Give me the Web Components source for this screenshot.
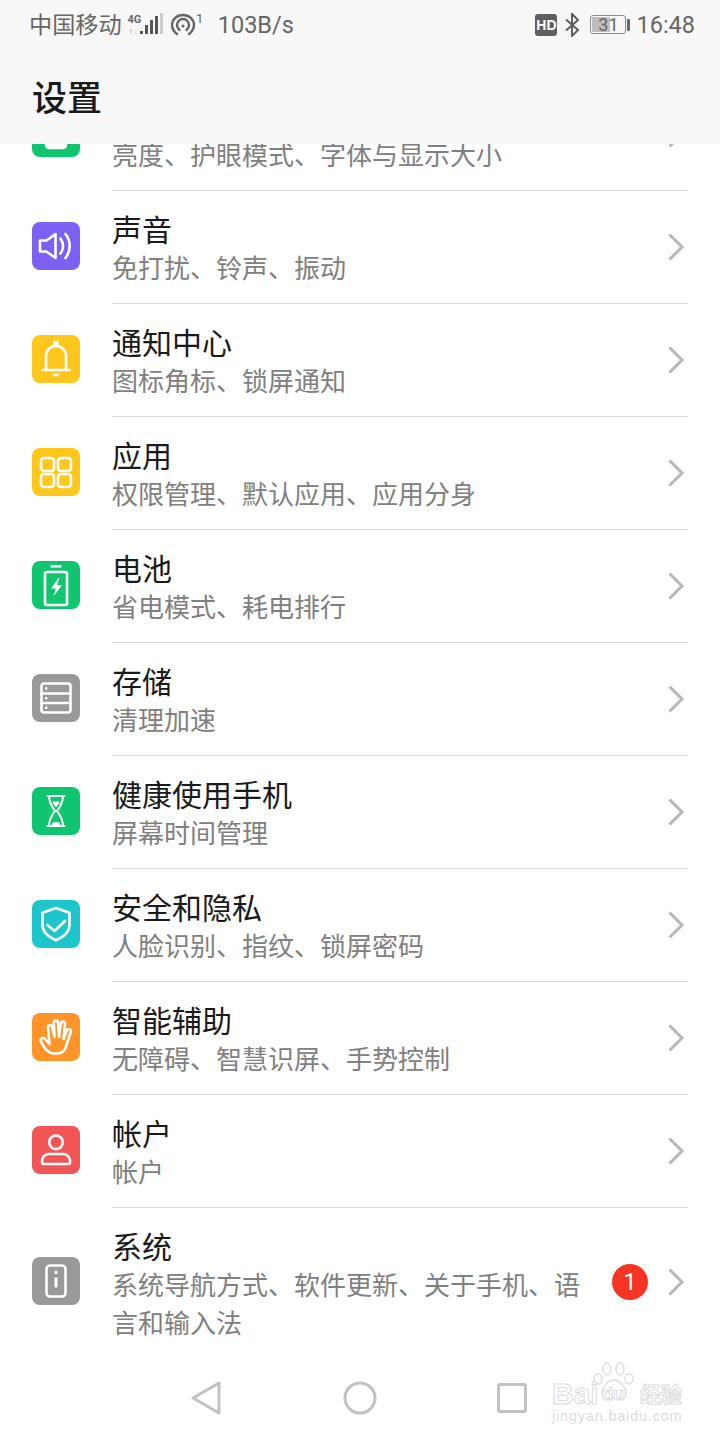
<!DOCTYPE html>
<html lang="zh">
<head>
<meta charset="utf-8">
<title>设置</title>
<style>
  html, body { margin: 0; padding: 0; background: #fff; }
  body {
    width: 720px; height: 1440px; overflow: hidden;
    display: flex; flex-direction: column; position: relative;
    font-family: Roboto, "Noto Sans CJK SC", sans-serif;
  }
  main { flex: 1; min-height: 0; overflow: hidden; }
  .list { margin-top: -66px; }
</style>
</head>
<body>
<app-header title="设置"></app-header>
<main>
  <div class="list">
    <setting-row heading="" sub="亮度、护眼模式、字体与显示大小" icon="display" color="#0fc66f"></setting-row>
    <setting-row heading="声音" sub="免打扰、铃声、振动" icon="sound" color="#7d60f2"></setting-row>
    <setting-row heading="通知中心" sub="图标角标、锁屏通知" icon="bell" color="#ffc71c"></setting-row>
    <setting-row heading="应用" sub="权限管理、默认应用、应用分身" icon="apps" color="#ffc71c"></setting-row>
    <setting-row heading="电池" sub="省电模式、耗电排行" icon="battery" color="#0fc66f"></setting-row>
    <setting-row heading="存储" sub="清理加速" icon="storage" color="#999999"></setting-row>
    <setting-row heading="健康使用手机" sub="屏幕时间管理" icon="hourglass" color="#0fc66f"></setting-row>
    <setting-row heading="安全和隐私" sub="人脸识别、指纹、锁屏密码" icon="shield" color="#1cc6cc"></setting-row>
    <setting-row heading="智能辅助" sub="无障碍、智慧识屏、手势控制" icon="hand" color="#ff9428"></setting-row>
    <setting-row heading="帐户" sub="帐户" icon="user" color="#f25555"></setting-row>
    <setting-row heading="系统" sub="系统导航方式、软件更新、关于手机、语言和输入法" icon="info" color="#999999" badge="1" last></setting-row>
  </div>
</main>
<nav-bar></nav-bar>
<baidu-mark></baidu-mark>

<script>
const ICONS = {
  display: `<rect x="14" y="12" width="20" height="27" rx="3" fill="#fff"/>`,
  sound: `<path d="M8 18.500h6.500L23.500 12v24l-9-6.500H8z"/><path d="M28.500 16.500c3.400 4.500 3.400 10.500 0 15"/><path d="M33.500 12c5.600 7 5.600 17 0 24"/>`,
  bell: `<path d="M10.500 35h27"/><path d="M14 35V21a10 10 0 0 1 20 0v14"/><circle cx="24" cy="8.500" r="1.600" fill="#fff"/><path d="M20.500 38.700h7c-.8 2-2 2.800-3.500 2.800s-2.700-.8-3.500-2.800z" fill="#fff" stroke="none"/>`,
  apps: `<rect x="9" y="10" width="13" height="13" rx="3"/><rect x="26" y="10" width="13" height="13" rx="3"/><rect x="9" y="26" width="13" height="13" rx="3"/><rect x="26" y="26" width="13" height="13" rx="3"/>`,
  battery: `<rect x="13" y="11" width="22" height="33" rx="2"/><path d="M18.500 5.300h11" stroke-linecap="butt"/><path d="M26.500 17L19 27.500h4.800l-2.300 8L30 24h-5l2.500-7z" fill="#fff" stroke="none"/>`,
  storage: `<rect x="9.500" y="9.500" width="29" height="29" rx="2.500"/><path d="M9.500 19.500h29M9.500 29h29"/><g fill="#fff" stroke="none"><rect x="13" y="13.200" width="2.400" height="2.400"/><rect x="13" y="23" width="2.400" height="2.400"/><rect x="13" y="32.600" width="2.400" height="2.400"/></g>`,
  hourglass: `<g stroke-width="2"><path d="M15.500 9h17M15.500 39h17"/><path d="M17 9c0 7 3 11 6 15-3 4-6 8-6 15M31 9c0 7-3 11-6 15 3 4 6 8 6 15"/></g><path d="M20.500 15c1.200-1 2.300-.7 3.500 0 1.200-.7 2.300-1 3.500 0 0 1.800-1.800 3.500-3.500 5-1.700-1.500-3.500-3.200-3.500-5zM19.500 38c.8-2 2.500-3.200 4.500-3.200s3.700 1.200 4.500 3.200z" fill="#fff" stroke="none"/>`,
  shield: `<path d="M24 8l13.500 4.800v12c0 7.400-6.500 12.500-13.500 15.500-7-3-13.500-8.100-13.500-15.500v-12z"/><path d="M15.500 25l7 6 10.500-10"/>`,
  hand: `<path d="M17.500 31L13 26C11 24 7.500 25.500 9 28.500 10.500 32 13.500 36.500 17 39 19 40.500 21 40.500 24 40.500 29 40.500 32 39 33.500 35L38.700 19A2.100 2.100 0 0 0 34.600 17.700L31.500 26 33 11A2.100 2.100 0 0 0 28.800 10.500L27 24 26 9.500A2.100 2.100 0 0 0 21.800 9.800L22.500 24 20 13.500A2.100 2.100 0 0 0 16 14.500z"/>`,
  user: `<circle cx="24" cy="16.300" r="6.800"/><path d="M17 28h14a7 7 0 0 1 7 7v1.500a1.500 1.500 0 0 1-1.500 1.500h-25a1.500 1.500 0 0 1-1.500-1.500V35a7 7 0 0 1 7-7z"/>`,
  info: `<rect x="14.500" y="8.500" width="19" height="31" rx="3.500"/><circle cx="24" cy="15.500" r="1.800" fill="#fff" stroke="none"/><path d="M24 20.500v10" stroke-linecap="butt" stroke-width="3"/>`
};

class AppHeader extends HTMLElement {
  constructor() {
    super();
    this.attachShadow({mode: 'open'});
    this.shadowRoot.innerHTML = `
      <style>
        :host { display: block; height: 144px; background: #f7f7f7; flex: none; }
        h1 {
          margin: 0; padding: 0 0 0 32px; height: 46px;
          font: 500 35px/46px "Noto Sans CJK SC", sans-serif; color: #1a1a1a;
        }
      </style>
      <status-bar></status-bar>
      <h1>${this.getAttribute('title')}</h1>
    `;
  }
}

class StatusBar extends HTMLElement {
  constructor() {
    super();
    this.attachShadow({mode: 'open'});
    this.shadowRoot.innerHTML = `
      <style>
        :host {
          display: flex; align-items: center; height: 50px; margin-bottom: 23px;
          padding: 0 25px 0 29px; color: #666;
          font: 23.500px/50px Roboto, "Noto Sans CJK SC", sans-serif;
        }
        .carrier { font: 23.200px/46px "Noto Sans CJK SC", sans-serif; margin-bottom: 4px; }
        svg { display: block; flex: none; }
        .signal { margin-left: 5px; }
        .hotspot { margin-left: 8px; }
        .speed { margin-left: 13px; }
        .space { flex: 1; }
        .hd {
          width: 22px; height: 22px; border-radius: 3px; background: #5f5f5f; color: #fff;
          font: 700 14px/22px "Liberation Sans", sans-serif; text-align: center;
        }
        .bt { margin-left: 8px; }
        .bat { margin-left: 11px; width: 40px; height: 19px; display: flex; margin-top: -2px; }
        .bat b {
          display: block; width: 36px; height: 19px; box-sizing: border-box;
          border: 1px solid #8a8a8a; border-radius: 3px;
          font: 400 18px/17px Roboto, sans-serif; text-align: center; color: #666;
          background: linear-gradient(#bdbdbd, #bdbdbd) 1px 1px / 18px 15px no-repeat;
        }
        .bat i { display: block; width: 3px; height: 12px; margin: 4px 0 0 1px; background: #666; border-radius: 1px; }
        .time { margin-left: 6px; }
      </style>
      <span class="carrier">中国移动</span>
      <svg class="signal" width="36" height="24" viewBox="0 0 36 24">
        <text x="0.500" y="10" font-family="Roboto, sans-serif" font-size="11" font-weight="700" fill="#666">4G</text>
        <text x="1.500" y="20.500" font-family="Roboto, sans-serif" font-size="8" font-weight="700" fill="#c8c8c8">1↓</text>
        <rect x="13" y="18" width="3" height="3" fill="#555"/>
        <rect x="18" y="12" width="3" height="9" fill="#555"/>
        <rect x="23" y="7" width="3" height="14" fill="#555"/>
        <rect x="28" y="3" width="3" height="18" fill="#555"/>
        <rect x="33" y="0" width="3" height="21" fill="#cccccc"/>
      </svg>
      <svg class="hotspot" width="34" height="26" viewBox="0 0 34 26" fill="none" stroke="#666" stroke-width="2.400" stroke-linecap="round">
        <path d="M6 22c-4-3-5-6.500-5-9A11 10 0 0 1 23 13c0 2.500-1 6-5 9"/>
        <path d="M8.500 18c-1.500-1.300-2.500-3-2.500-5a6 6 0 0 1 12 0c0 2-1 3.700-2.500 5"/>
        <circle cx="12" cy="14" r="1.600" fill="#666" stroke="none"/>
        <text x="25" y="11" font-family="Roboto, sans-serif" font-size="13" fill="#666" stroke="none">1</text>
      </svg>
      <span class="speed">103B/s</span>
      <span class="space"></span>
      <span class="hd">HD</span>
      <svg class="bt" width="14" height="24" viewBox="0 0 14 24" fill="none" stroke="#5f5f5f" stroke-width="2">
        <path d="M1 6.500l12 10.500-6 6V1l6 6L1 17.500"/>
      </svg>
      <span class="bat"><b>31</b><i></i></span>
      <span class="time">16:48</span>
    `;
  }
}

class SettingRow extends HTMLElement {
  constructor() {
    super();
    this.attachShadow({mode: 'open'});
    const badge = this.getAttribute('badge');
    const last = this.hasAttribute('last');
    this.shadowRoot.innerHTML = `
      <style>
        :host { display: flex; align-items: center; padding: 0 32px; }
        .icon {
          flex: none; width: 48px; height: 48px; border-radius: 8px; margin: -4px 32px 0 0;
          background: ${this.getAttribute('color')};
        }
        .icon svg { display: block; }
        .body {
          flex: 1; min-width: 0; display: flex; align-items: center;
          padding: 19px 0 17px; border-bottom: ${last ? 'none' : '1px solid #d9d9d9'};
        }
        .text { flex: 1; min-width: 0; }
        .heading { height: 36px; margin-bottom: 2px; font: 30px/36px "Noto Sans CJK SC", sans-serif; color: #1a1a1a; }
        .sub { font: 26px/38px "Noto Sans CJK SC", sans-serif; color: #808080; }
        .badge {
          flex: none; width: 36px; height: 36px; border-radius: 50%; margin: 0 0 4px 12px;
          background: #f63424; color: #fff; text-align: center;
          font: 24px/36px Roboto, sans-serif;
        }
        .chev { flex: none; margin: 0 0 ${last ? 4 : 2}px 18px; display: block; }
      </style>
      <div class="icon">
        <svg width="48" height="48" viewBox="0 0 48 48" fill="none" stroke="#fff" stroke-width="2.600" stroke-linecap="round" stroke-linejoin="round">${ICONS[this.getAttribute('icon')]}</svg>
      </div>
      <div class="body">
        <div class="text">
          <div class="heading">${this.getAttribute('heading')}</div>
          <div class="sub">${this.getAttribute('sub')}</div>
        </div>
        ${badge ? `<div class="badge">${badge}</div>` : ''}
        <svg class="chev" width="22" height="28" viewBox="0 0 22 28" fill="none" stroke="#b8b8b8" stroke-width="3"><path d="M3.500 1.500 L16 14 L3.500 26.500"/></svg>
      </div>
    `;
  }
}

class NavBar extends HTMLElement {
  constructor() {
    super();
    this.attachShadow({mode: 'open'});
    this.shadowRoot.innerHTML = `
      <style>
        :host { display: flex; flex: none; height: 84px; align-items: center; padding-left: 190px; }
        svg { display: block; flex: none; }
        .home { margin-left: 121px; }
        .recent { margin-left: 120px; }
      </style>
      <svg width="32" height="36" viewBox="0 0 32 36" fill="none" stroke="#c2c2c2" stroke-width="3" stroke-linejoin="round"><path d="M29 3v30L3 18z"/></svg>
      <svg class="home" width="34" height="34" viewBox="0 0 34 34" fill="none" stroke="#c2c2c2" stroke-width="3"><circle cx="17" cy="17" r="15"/></svg>
      <svg class="recent" width="30" height="30" viewBox="0 0 30 30" fill="none" stroke="#c2c2c2" stroke-width="3" stroke-linejoin="round"><rect x="1.500" y="1.500" width="27" height="27" rx="1.500"/></svg>
    `;
  }
}

class BaiduMark extends HTMLElement {
  constructor() {
    super();
    this.attachShadow({mode: 'open'});
    this.shadowRoot.innerHTML = `
      <style>
        :host {
          position: absolute; left: 550px; top: 1360px; width: 134px; height: 64px;
          color: #fff; pointer-events: none;
          font-family: "Liberation Sans", "Noto Sans CJK SC", sans-serif;
        }
        svg { position: absolute; left: 42px; top: 1px; }
        div { position: absolute; white-space: nowrap; -webkit-text-stroke: 1px #dcdcdc; }
        .bai { left: 2px; top: 18px; font: 700 30px/32px "Liberation Sans", sans-serif; }
        .du { left: 52px; top: 24px; font: 700 18px/20px "Liberation Sans", sans-serif; }
        .cn { left: 90px; top: 18px; font: 700 21px/30px "Noto Sans CJK SC", sans-serif; }
        .url {
          left: 2px; top: 47px; font: 14.500px/18px "Liberation Sans", sans-serif;
          letter-spacing: .8px; color: #dedede; -webkit-text-stroke: 0;
        }
      </style>
      <svg width="46" height="44" viewBox="0 0 46 44" fill="none" stroke="#dcdcdc" stroke-width="1.300">
        <ellipse cx="6" cy="18" rx="4" ry="5"/><ellipse cx="15" cy="8" rx="4" ry="6"/><ellipse cx="28" cy="8" rx="4" ry="6"/><ellipse cx="37" cy="18" rx="4" ry="5"/>
        <path d="M12 26c3-5 6-7 10-7s7 2 10 7c3 4 3 12-3 12-3 0-4-1-7-1s-4 1-7 1c-6 0-6-8-3-12z"/>
      </svg>
      <div class="bai">Bai</div>
      <div class="du">du</div>
      <div class="cn">经验</div>
      <div class="url">jingyan.baidu.com</div>
    `;
  }
}

customElements.define('status-bar', StatusBar);
customElements.define('app-header', AppHeader);
customElements.define('setting-row', SettingRow);
customElements.define('nav-bar', NavBar);
customElements.define('baidu-mark', BaiduMark);
</script>
</body>
</html>
